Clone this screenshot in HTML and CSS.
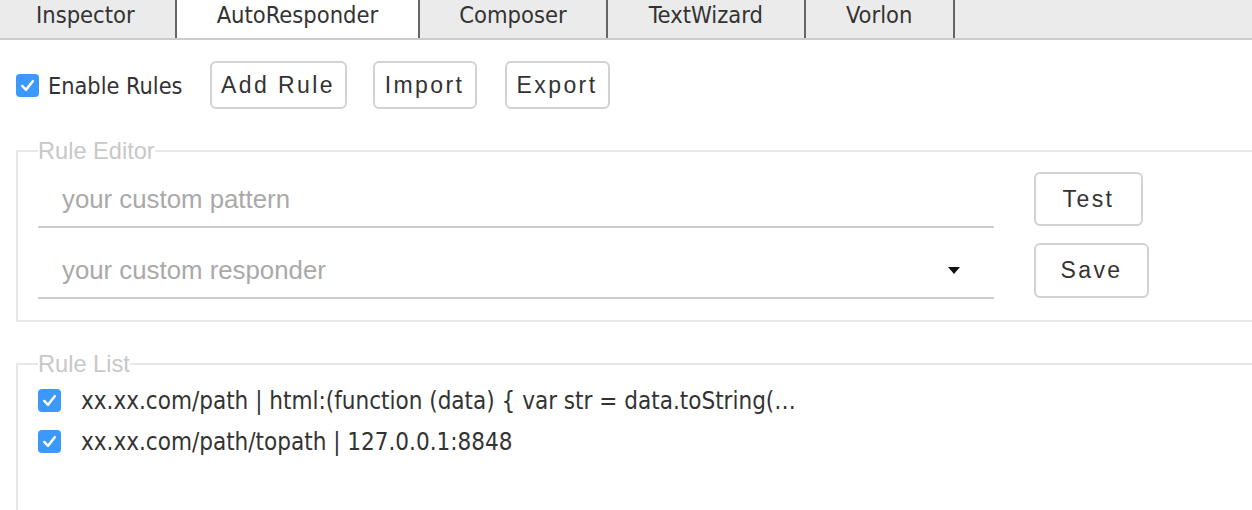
FILE: index.html
```html
<!DOCTYPE html>
<html>
<head>
<meta charset="utf-8">
<link rel="stylesheet" href="styles.css">
</head>
<body>
<div class="page">
  <nav class="tabs">
    <div class="tab tab-first">Inspector</div>
    <div class="tab tab-active">AutoResponder</div>
    <div class="tab tab-composer">Composer</div>
    <div class="tab tab-wizard">TextWizard</div>
    <div class="tab tab-vorlon">Vorlon</div>
    <div class="tab-rest"></div>
  </nav>

  <div class="toolbar">
    <label class="check-label">
      <span class="check"><svg viewBox="0 0 24 24" width="24" height="24"><path d="M6.5 12.5 L10.5 16.5 L17.5 7.5" fill="none" stroke="#fff" stroke-width="2.6" stroke-linecap="round" stroke-linejoin="round"/></svg></span>
      <span class="check-text">Enable Rules</span>
    </label>
    <button class="btn btn-add">Add Rule</button>
    <button class="btn btn-import">Import</button>
    <button class="btn btn-export">Export</button>
  </div>

  <fieldset class="group editor">
    <legend>Rule Editor</legend>
    <div class="editor-grid">
      <div class="field"><span class="placeholder">your custom pattern</span></div>
      <button class="btn btn-big">Test</button>
      <div class="field field-select"><span class="placeholder">your custom responder</span><span class="caret"></span></div>
      <button class="btn btn-big btn-save">Save</button>
    </div>
  </fieldset>

  <fieldset class="group list">
    <legend>Rule List</legend>
    <ul class="rules">
      <li class="rule">
        <span class="check"><svg viewBox="0 0 24 24" width="24" height="24"><path d="M6.5 12.5 L10.5 16.5 L17.5 7.5" fill="none" stroke="#fff" stroke-width="2.6" stroke-linecap="round" stroke-linejoin="round"/></svg></span>
        <span class="rule-text">xx.xx.com/path | html:(function (data) { var str = data.toString(…</span>
      </li>
      <li class="rule">
        <span class="check"><svg viewBox="0 0 24 24" width="24" height="24"><path d="M6.5 12.5 L10.5 16.5 L17.5 7.5" fill="none" stroke="#fff" stroke-width="2.6" stroke-linecap="round" stroke-linejoin="round"/></svg></span>
        <span class="rule-text">xx.xx.com/path/topath | 127.0.0.1:8848</span>
      </li>
    </ul>
  </fieldset>
</div>
</body>
</html>
```
FILE: styles.css
```css
html, body {
  margin: 0;
  padding: 0;
  background: #fff;
  overflow: hidden;
}

.page {
  width: 1252px;
  height: 510px;
  overflow: hidden;
  color: #333;
  font-family: "DejaVu Sans Condensed", "DejaVu Sans", sans-serif;
  font-stretch: condensed;
}

/* Tabs */
.tabs {
  display: flex;
  height: 38px;
  border-bottom: 2px solid #cccccc;
  background: #ebebeb;
  margin-left: -4px;
}

.tab {
  padding: 1px 40px 0;
  font-size: 23.5px;
  line-height: 28px;
  color: #333;
  border-right: 2px solid #666;
  white-space: nowrap;
}

.tab-active {
  background: #fff;
}

.tab-composer {
  padding: 1px 39px 0;
}

.tab-wizard {
  padding: 1px 41px 0;
}

.tab-vorlon {
  padding: 1px 41px 0 40px;
}

.tab-rest {
  flex: 1;
}

/* Toolbar */
.toolbar {
  display: flex;
  align-items: center;
  height: 48px;
  margin: 21px 0 0 16px;
}

.check-label {
  display: flex;
  align-items: center;
  margin-right: 27px;
}

.check {
  display: inline-flex;
  width: 23px;
  height: 23px;
  border-radius: 4px;
  background: #3b99fc;
  flex: none;
}

.check svg {
  width: 23px;
  height: 23px;
}

.check-text {
  margin-left: 9px;
  font-size: 23.3px;
}

.btn {
  font-family: "Liberation Sans", Arial, sans-serif;
  font-size: 23px;
  letter-spacing: 2.4px;
  color: #333;
  background: #fff;
  border: 2px solid #d2d2d2;
  border-radius: 6px;
  height: 48px;
  padding: 0;
  margin: 0;
  white-space: nowrap;
  text-align: center;
}

.btn-add {
  width: 137px;
  margin-right: 26px;
}

.btn-import {
  width: 104px;
  margin-right: 28px;
}

.btn-export {
  width: 105px;
}

/* Fieldsets */
.group {
  margin: 0 -30px 0 16px;
  border: 2px solid #e8e8e8;
  padding: 9px 0 0 20px;
}

.group legend {
  padding: 0;
  font-family: "Liberation Sans", Arial, sans-serif;
  font-size: 23.6px;
  line-height: 24px;
  color: #c8c8c8;
}

.editor {
  margin-top: 30px;
  padding-bottom: 21px;
}

.editor-grid {
  display: grid;
  grid-template-columns: 956px auto;
  column-gap: 40px;
  row-gap: 15px;
  justify-content: start;
  align-items: start;
}

.field {
  display: flex;
  align-items: center;
  justify-content: space-between;
  height: 54px;
  border-bottom: 2px solid #cccccc;
  padding: 0 34px 0 24px;
  font-family: "Liberation Sans", Arial, sans-serif;
  font-size: 25.8px;
}

.placeholder {
  color: #a9a9a9;
}

.caret {
  width: 0;
  height: 0;
  border-left: 6px solid transparent;
  border-right: 6px solid transparent;
  border-top: 7px solid #111;
}

.btn-big {
  justify-self: start;
  height: 54px;
  width: 109px;
}

.btn-save {
  height: 55px;
  width: 115px;
}

.list {
  margin-top: 30px;
  min-height: 200px;
  padding-top: 4px;
}

.rules {
  list-style: none;
  margin: 0;
  padding: 0;
}

.rule {
  display: flex;
  align-items: center;
  height: 41px;
}

.rule-text {
  margin-left: 20px;
  font-size: 24px;
  white-space: nowrap;
}
```
